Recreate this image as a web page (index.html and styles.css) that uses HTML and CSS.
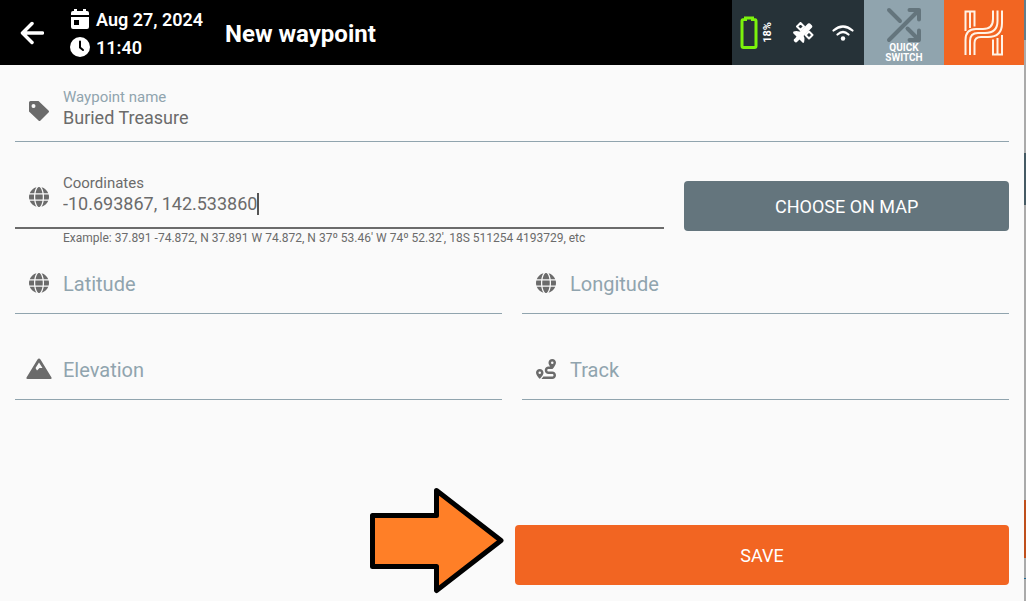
FILE: index.html
```html
<!DOCTYPE html>
<html lang="en">
  <head>
    <meta charset="UTF-8" />
    <meta name="viewport" content="width=device-width, initial-scale=1.0" />
    <title>New waypoint</title>
    <link rel="stylesheet" href="styles.css">
  </head>
  <body>
    <svg class="sprite" aria-hidden="true">
      <symbol id="globe" viewBox="0 0 512 512">
        <path d="M352 256c0 22.200-1.200 43.600-3.300 64H163.300c-2.200-20.400-3.300-41.800-3.300-64s1.200-43.600 3.300-64H348.700c2.200 20.400 3.300 41.800 3.300 64zm28.800-64H503.900c5.300 20.500 8.100 41.900 8.100 64s-2.800 43.500-8.100 64H380.800c2.100-20.600 3.200-42 3.200-64s-1.100-43.400-3.200-64zm112.600-32H376.700c-10-63.900-29.800-117.400-55.300-151.600c78.300 20.700 142 77.500 171.900 151.600zm-149.100 0H167.700c6.100-36.400 15.500-68.600 27-94.700c10.500-23.600 22.200-40.700 33.500-51.500C239.400 3.200 248.700 0 256 0s16.600 3.200 27.800 13.800c11.300 10.800 23 27.900 33.500 51.500c11.600 26 20.900 58.200 27 94.700zm-209 0H18.600C48.600 85.900 112.200 29.100 190.600 8.400C165.100 42.600 145.300 96.100 135.300 160zM8.100 192H131.200c-2.100 20.600-3.200 42-3.200 64s1.100 43.400 3.200 64H8.100C2.800 299.500 0 278.100 0 256s2.800-43.500 8.100-64zM194.700 446.600c-11.600-26-20.900-58.200-27-94.600H344.300c-6.100 36.400-15.500 68.600-27 94.600c-10.500 23.600-22.200 40.700-33.500 51.500C272.600 508.800 263.300 512 256 512s-16.600-3.200-27.800-13.800c-11.300-10.800-23-27.900-33.500-51.500zM135.300 352c10 63.900 29.800 117.400 55.300 151.600C112.200 482.900 48.600 426.100 18.600 352H135.300zm358.100 0c-30 74.100-93.600 130.900-171.900 151.600c25.500-34.200 45.200-87.700 55.300-151.600H493.400z" />
      </symbol>
    </svg>

    <div class="app">
      <header class="topbar">
        <button class="back" type="button" aria-label="Back">
          <svg width="24" height="24" viewBox="0 0 24 24"><path d="M22.500 12H3M12 2.500L2.500 12L12 21.500" fill="none" stroke="#fff" stroke-width="3.500" stroke-linecap="round" stroke-linejoin="round" /></svg>
        </button>
        <div class="clock">
          <div class="clock-row">
            <svg width="20" height="20" viewBox="0 0 20 20"><path d="M1 8h18v10a2 2 0 0 1-2 2H3a2 2 0 0 1-2-2zM1 6V4a2 2 0 0 1 2-2h1V0h3v2h6V0h3v2h1a2 2 0 0 1 2 2v2zM4 11v5h5v-5z" fill="#fff" fill-rule="evenodd" /></svg>
            <span>Aug 27, 2024</span>
          </div>
          <div class="clock-row">
            <svg width="20" height="20" viewBox="0 0 20 20"><circle cx="10" cy="10" r="10" fill="#fff" /><path d="M10 4.500V10.500L13 13" fill="none" stroke="#000" stroke-width="2" stroke-linecap="round" /></svg>
            <span>11:40</span>
          </div>
        </div>
        <h1>New waypoint</h1>
        <div class="status">
          <div class="battery">
            <svg width="18" height="34" viewBox="0 0 18 34"><path d="M2 5Q2 3.500 4 3.500H5.500V2H12.500V3.500H14Q16 3.500 16 5V30Q16 31.500 14.500 31.500H3.500Q2 31.500 2 30Z" fill="none" stroke="#7cf30c" stroke-width="3" /></svg>
            <span class="percent">18%</span>
          </div>
          <svg width="22" height="22" viewBox="0 0 22 22"><path d="M8.500 1L12 4.500L8.500 8L5 4.500ZM17 9.500L20.500 13L17 16.500L13.500 13Z" fill="none" stroke="#fff" stroke-width="2" stroke-linejoin="round" /><path d="M11.500 6L16 1.500Q17 .8 18 1.500L20 3.500Q20.800 4.500 20 5.500L15.500 10L11.500 14L7.500 10ZM1.500 9.500Q6.500 8 10 11.500Q13.500 15 12 20.500L11 21L7.500 17.500L5.500 19.500A2 2 0 1 1 3 16.500L4.500 14.500L1 11Z" fill="#fff" /></svg>
          <svg width="22" height="18" viewBox="0 0 22 18"><path d="M1.500 6.500Q11-1.500 20.500 6.500M5.500 10.500Q11 5.500 16.500 10.500" fill="none" stroke="#fff" stroke-width="2.200" stroke-linecap="round" /><circle cx="11" cy="14.500" r="2.200" fill="#fff" /></svg>
        </div>
        <button class="quick" type="button">
          <svg width="36" height="36" viewBox="0 0 36 36"><path d="M3 3L14 14M3 33L33 3M23.500 3H33V12.500M21.500 21.500L33 33M23.500 33H33V23.500" fill="none" stroke="#64757d" stroke-width="4" stroke-linecap="round" stroke-linejoin="round" /></svg>
          <span>QUICK<br>SWITCH</span>
        </button>
        <button class="brand" type="button" aria-label="Home">
          <svg width="40" height="46" viewBox="0 0 40 46" fill="none" stroke="#fff3e6" stroke-width="2">
            <path d="M1.500 21V1.500H10.500V16.500M6 18V1.500" />
            <path d="M38 25V44.500H29V29.500M33.500 28V44.500" />
            <path d="M1.500 45V30Q1.500 19 12 19H19Q29 19 29 9V.5" />
            <path d="M6 45V31Q6 23 14 23H21Q33.500 23 33.500 11V.5" />
            <path d="M10.500 45V33Q10.500 27 17 27H24Q38 27 38 13V.5" />
          </svg>
        </button>
      </header>

      <form class="form">
        <div class="field">
          <svg class="icon" viewBox="0 0 24 24"><path d="M2 3.500A1.500 1.500 0 0 1 3.500 2H11.500L21.500 11.500Q22.500 12.500 21.500 13.500L13.500 21.500Q12.500 22.500 11.500 21.500L2 12.500ZM6.500 5A2 2 0 1 0 6.500 9A2 2 0 1 0 6.500 5Z" fill-rule="evenodd" /></svg>
          <div class="field-text">
            <label for="name">Waypoint name</label>
            <input type="text" id="name" name="name" value="Buried Treasure" />
          </div>
        </div>

        <div class="row row-coordinates">
          <div>
            <div class="field active">
              <svg class="icon globe"><use href="#globe" /></svg>
              <div class="field-text">
                <label for="coordinates">Coordinates</label>
                <input type="text" id="coordinates" name="coordinates" value="-10.693867, 142.533860" />
              </div>
            </div>
            <p class="hint">Example: 37.891 -74.872, N 37.891 W 74.872, N 37º 53.46' W 74º 52.32', 18S 511254 4193729, etc</p>
          </div>
          <button class="btn btn-map" type="button">CHOOSE ON MAP</button>
        </div>

        <div class="row">
          <div class="field empty">
            <svg class="icon globe"><use href="#globe" /></svg>
            <label for="latitude">Latitude</label>
            <input type="text" id="latitude" name="latitude" />
          </div>
          <div class="field empty">
            <svg class="icon globe"><use href="#globe" /></svg>
            <label for="longitude">Longitude</label>
            <input type="text" id="longitude" name="longitude" />
          </div>
        </div>

        <div class="row">
          <div class="field empty">
            <svg class="icon mountain" viewBox="0 0 26 21"><path d="M13 0Q13.800 0 14.500 1L25.500 19Q26 20.500 24.500 20.500H1.500Q0 20.500 .5 19L11.500 1Q12.200 0 13 0ZM13 4L9.500 9.500L11 12L13.500 9.500H16.500Z" fill-rule="evenodd" /></svg>
            <label for="elevation">Elevation</label>
            <input type="text" id="elevation" name="elevation" />
          </div>
          <div class="field empty">
            <svg class="icon route" viewBox="0 0 512 512"><path d="M512 96c0 50.200-59.100 125.100-84.600 155c-3.800 4.400-9.400 6.100-14.500 5H320c-17.700 0-32 14.300-32 32s14.300 32 32 32h96c53 0 96 43 96 96s-43 96-96 96H139.600c8.700-9.900 19.300-22.600 30-36.800c6.300-8.400 12.800-17.600 19-27.200H416c17.700 0 32-14.300 32-32s-14.300-32-32-32H320c-53 0-96-43-96-96s43-96 96-96h39.800c-21-31.500-39.800-67.700-39.800-96c0-53 43-96 96-96s96 43 96 96zM117.100 489.100c-3.800 4.300-7.200 8.100-10.100 11.300l-1.800 2l-.2-.2c-6 4.600-14.600 4-20-1.800C59.800 473 0 402.500 0 352c0-53 43-96 96-96s96 43 96 96c0 30-21.100 67-43.500 97.900c-10.700 14.700-21.700 28-30.800 38.500l-.6 .7zM128 352a32 32 0 1 0-64 0a32 32 0 1 0 64 0zM416 128a32 32 0 1 0 0-64a32 32 0 1 0 0 64z" /></svg>
            <label for="track">Track</label>
            <input type="text" id="track" name="track" />
          </div>
        </div>

        <div class="actions">
          <svg class="pointer" width="134" height="108" viewBox="0 0 134 108" aria-hidden="true"><path d="M2.500 28.500H66.500V3.500L131 53.500L66.500 103.500V79.500H2.500Z" fill="#ff7f27" stroke="#000" stroke-width="5" stroke-linejoin="round" /></svg>
          <button class="btn btn-save" type="submit">SAVE</button>
        </div>
      </form>
    </div>
    <div class="edge"></div>
  </body>
</html>
```

FILE: styles.css
```css
* {
  box-sizing: border-box;
}
body {
  margin: 0;
  min-height: 100vh;
  display: flex;
  font-family: Roboto, "Liberation Sans", sans-serif;
  background-color: #fafafa;
  color: #6b6b6b;
}
button,
input {
  font-family: inherit;
}
.sprite {
  position: absolute;
  width: 0;
  height: 0;
}
.app {
  flex: 1;
  display: flex;
  flex-direction: column;
}
/* strip of the next screen on the right */
.edge {
  width: 2px;
  background: linear-gradient(
    #607d8b 40px, #aaa 40px, #aaa 153px,
    #455a64 153px, #455a64 205px, #aaa 205px, #aaa 500px,
    #bf4f1c 500px, #bf4f1c 558px, #aaa 558px, #aaa 578px,
    #1f6a94 578px, #1f6a94 579px, #aaa 579px
  );
}

/* top bar */
.topbar {
  display: flex;
  align-items: stretch;
  height: 65px;
  background-color: #000;
  color: #fff;
}
.topbar button {
  border: none;
  padding: 0;
  cursor: pointer;
}
.topbar .back {
  width: 70px;
  padding-left: 20px;
  background: none;
  text-align: left;
}
.back svg {
  display: block;
}
.clock {
  width: 155px;
  padding-top: 5px;
  font-size: 18px;
  font-weight: 600;
}
.clock-row {
  display: flex;
  align-items: center;
  gap: 6px;
  height: 28px;
}
h1 {
  flex: 1;
  margin: 0;
  font-size: 24px;
  line-height: 68px;
  font-weight: 700;
}
.status {
  display: flex;
  align-items: center;
  justify-content: space-between;
  width: 132px;
  padding: 0 10px 0 8px;
  background-color: #263238;
}
.battery {
  display: flex;
  align-items: center;
  gap: 4px;
}
.percent {
  writing-mode: vertical-rl;
  transform: rotate(180deg);
  font-size: 11px;
  line-height: 12px;
  font-weight: 700;
}
.quick {
  display: flex;
  flex-direction: column;
  align-items: center;
  justify-content: flex-end;
  width: 80px;
  background-color: #90a4ae;
  color: #fff;
  font-size: 10px;
  line-height: 10px;
  font-weight: 700;
}
.topbar .quick {
  padding-bottom: 2px;
}
.brand {
  display: flex;
  align-items: center;
  justify-content: center;
  width: 80px;
  background-color: #f26522;
}

/* form */
.form {
  flex: 1;
  display: flex;
  flex-direction: column;
  padding: 17px 15px 16px;
}
.row {
  display: grid;
  grid-template-columns: 1fr 1fr;
  column-gap: 20px;
  margin-bottom: 26px;
}
.row-coordinates {
  grid-template-columns: 2fr 1fr;
  margin: 26px 0 7px;
}
.field {
  display: flex;
  align-items: center;
  height: 60px;
  padding-left: 12px;
  border-bottom: 1px solid #90a4ae;
}
.field.active {
  height: 61px;
  border-bottom: 2px solid #6b6b6b;
}
.icon {
  width: 24px;
  height: 24px;
  margin: 0 12px 2px 0;
  fill: #6b6b6b;
}
.icon.globe,
.icon.route {
  width: 20px;
  height: 20px;
  margin: 0 14px 2px 2px;
}
.icon.mountain {
  width: 26px;
  margin: 0 11px 2px -1px;
}
.field-text {
  flex: 1;
  display: flex;
  flex-direction: column;
  align-items: flex-start;
  padding-bottom: 8px;
}
label {
  color: #90a4ae;
  font-size: 15px;
  line-height: 20px;
}
.active label {
  color: #6b6b6b;
}
input {
  width: 100%;
  height: 22px;
  padding: 0;
  border: none;
  outline: none;
  background: none;
  color: #6b6b6b;
  font-size: 18px;
}
/* text cursor right after the value */
.active input {
  width: auto;
  field-sizing: content;
  border-right: 2px solid #555;
}
.empty label {
  font-size: 20px;
  line-height: 24px;
}
.empty input {
  flex: 1;
  width: auto;
  min-width: 0;
}
.hint {
  margin: 0;
  padding-left: 48px;
  font-size: 12px;
  line-height: 18px;
}
.btn {
  border: none;
  border-radius: 4px;
  color: #fff;
  font-size: 18px;
  cursor: pointer;
}
.btn-map {
  height: 50px;
  margin-top: 13px;
  background-color: #64757d;
}
.actions {
  position: relative;
  align-self: flex-end;
  width: 50%;
  margin-top: auto;
  padding-left: 3px;
}
.btn-save {
  display: block;
  width: 100%;
  height: 60px;
  background-color: #f26522;
}
.pointer {
  position: absolute;
  right: 100%;
  top: -38px;
  margin-right: 8px;
}
```
